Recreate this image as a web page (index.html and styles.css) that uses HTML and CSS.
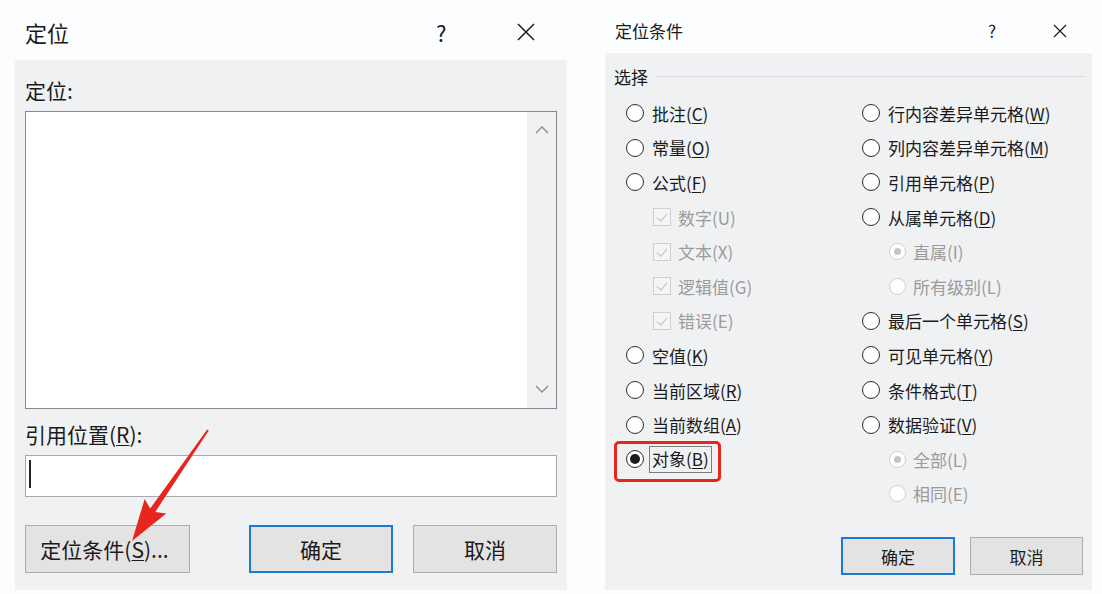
FILE: index.html
```html
<!DOCTYPE html>
<html lang="zh-CN">
<head>
    <meta charset="UTF-8">
    <title>定位</title>
    <link rel="stylesheet" href="styles.css">
</head>
<body>

<div class="screen">
    <!--左边：定位对话框-->
    <section class="dlg goto">
        <header class="goto-title">
            <span class="title-text">定位</span>
            <span class="help">?</span>
            <svg class="close" width="18" height="18" viewBox="0 0 18 18"><path d="M1 1L17 17M17 1L1 17" stroke="#222" stroke-width="1.6" fill="none"/></svg>
        </header>
        <div class="goto-body">
            <div class="label">定位:</div>
            <div class="listbox">
                <div class="list-area"></div>
                <div class="scrollbar">
                    <svg width="14" height="8" viewBox="0 0 14 8"><path d="M1 7L7 1L13 7" stroke="#8a8a8a" stroke-width="1.3" fill="none"/></svg>
                    <svg width="14" height="8" viewBox="0 0 14 8"><path d="M1 1L7 7L13 1" stroke="#8a8a8a" stroke-width="1.3" fill="none"/></svg>
                </div>
            </div>
            <div class="label label-ref">引用位置(<u>R</u>):</div>
            <div class="textbox"><span class="caret"></span></div>
            <div class="btn-row">
                <button class="btn btn-wide">定位条件(<u>S</u>)...</button>
                <div class="btn-group">
                    <button class="btn btn-default">确定</button>
                    <button class="btn">取消</button>
                </div>
            </div>
        </div>
        <!--红色箭头标注-->
        <svg class="arrow" width="600" height="594" viewBox="0 0 600 594">
            <polygon fill="#e8261e" points="207.2,429.4 150.2,508.6 144.7,498.9 132,541 166.3,513.5 155.2,512 208.8,430.6"/>
        </svg>
    </section>

    <!--右边：定位条件对话框-->
    <section class="dlg special">
        <header class="special-title">
            <span class="title-text">定位条件</span>
            <span class="help">?</span>
            <svg class="close" width="14" height="14" viewBox="0 0 14 14"><path d="M1 1L13 13M13 1L1 13" stroke="#222" stroke-width="1.3" fill="none"/></svg>
        </header>
        <div class="special-body">
            <div class="legend"><span>选择</span><i></i></div>
            <div class="cols">
                <div class="col">
                    <div class="opt"><span class="radio"></span>批注(<u>C</u>)</div>
                    <div class="opt"><span class="radio"></span>常量(<u>O</u>)</div>
                    <div class="opt"><span class="radio"></span>公式(<u>F</u>)</div>
                    <div class="opt sub off"><span class="check"></span>数字(U)</div>
                    <div class="opt sub off"><span class="check"></span>文本(X)</div>
                    <div class="opt sub off"><span class="check"></span>逻辑值(G)</div>
                    <div class="opt sub off"><span class="check"></span>错误(E)</div>
                    <div class="opt"><span class="radio"></span>空值(<u>K</u>)</div>
                    <div class="opt"><span class="radio"></span>当前区域(<u>R</u>)</div>
                    <div class="opt"><span class="radio"></span>当前数组(<u>A</u>)</div>
                    <div class="opt mark"><span class="radio on"></span><span class="focus">对象(<u>B</u>)</span></div>
                </div>
                <div class="col">
                    <div class="opt"><span class="radio"></span>行内容差异单元格(<u>W</u>)</div>
                    <div class="opt"><span class="radio"></span>列内容差异单元格(<u>M</u>)</div>
                    <div class="opt"><span class="radio"></span>引用单元格(<u>P</u>)</div>
                    <div class="opt"><span class="radio"></span>从属单元格(<u>D</u>)</div>
                    <div class="opt sub off"><span class="radio small on"></span>直属(I)</div>
                    <div class="opt sub off"><span class="radio small"></span>所有级别(L)</div>
                    <div class="opt"><span class="radio"></span>最后一个单元格(<u>S</u>)</div>
                    <div class="opt"><span class="radio"></span>可见单元格(<u>Y</u>)</div>
                    <div class="opt"><span class="radio"></span>条件格式(<u>T</u>)</div>
                    <div class="opt"><span class="radio"></span>数据验证(<u>V</u>)</div>
                    <div class="opt sub off"><span class="radio small on"></span>全部(L)</div>
                    <div class="opt sub off"><span class="radio small"></span>相同(E)</div>
                </div>
            </div>
            <div class="special-btns">
                <button class="btn btn-default">确定</button>
                <button class="btn">取消</button>
            </div>
        </div>
    </section>
</div>

</body>
</html>
```

FILE: styles.css
```css
body{
    margin: 0;
    background: #fcfdfe;
    font-family: "Noto Sans CJK SC", "Noto Sans", sans-serif;
    color: #1b1b1b;
}
u{
    text-decoration-thickness: 1px;
    text-underline-offset: 2px;
}
.screen{
    display: flex;
    width: 1102px;
    height: 594px;
    overflow: hidden;
}
.dlg{
    position: relative;
    display: flex;
    flex-direction: column;
}

/* 左边对话框 */
.goto{
    width: 600px;
    flex-shrink: 0;
    font-size: 21px;
}
.goto-title{
    height: 60px;
    display: flex;
    align-items: center;
    padding-left: 25px;
    box-sizing: border-box;
    padding-top: 4px;
}
.goto-title .title-text{
    width: 411px;
    font-size: 22px;
}
.goto-title .help{
    font-size: 22px;
    width: 81px;
    color: #222;
}
.goto-body{
    margin-left: 15px;
    width: 552px;
    height: 530px;
    box-sizing: border-box;
    padding: 15px 10px 0;
    background: #f0f1f3;
    display: flex;
    flex-direction: column;
}
.label{
    height: 30px;
    line-height: 30px;
}
.listbox{
    margin-top: 6px;
    height: 298px;
    box-sizing: border-box;
    border: 1px solid #858a92;
    display: flex;
    background: #fff;
}
.list-area{
    flex: 1;
}
.scrollbar{
    width: 29px;
    background: #f1f1f2;
    display: flex;
    flex-direction: column;
    justify-content: space-between;
    align-items: center;
    padding: 14px 0 15px;
}
.label-ref{
    margin-top: 10px;
}
.textbox{
    margin-top: 6px;
    height: 42px;
    box-sizing: border-box;
    border: 1px solid #a8a8a8;
    background: #fff;
    padding: 4px 3px;
}
.caret{
    display: block;
    width: 2px;
    height: 28px;
    background: #222;
}
.btn-row{
    margin-top: 28px;
    display: flex;
    justify-content: space-between;
}
.btn-group{
    display: flex;
    gap: 20px;
}
.btn{
    font-family: inherit;
    font-size: inherit;
    color: #1b1b1b;
    background: #e3e3e4;
    border: 1px solid #adadad;
    height: 48px;
    width: 144px;
    padding: 0;
    margin: 0;
}
.btn-wide{
    width: 165px;
    padding-right: 6px;
}
.btn-default{
    border: 2px solid #1a7bd4;
}
.arrow{
    position: absolute;
    left: 0;
    top: 0;
    pointer-events: none;
}

/* 右边对话框 */
.special{
    flex: 1;
    font-size: 17px;
}
.special-title{
    height: 53px;
    display: flex;
    align-items: center;
    padding-left: 15px;
    box-sizing: border-box;
    padding-top: 8px;
}
.special-title .title-text{
    width: 373px;
}
.special-title .help{
    font-size: 17px;
    width: 65px;
    color: #222;
}
.special-body{
    margin-left: 5px;
    width: 487px;
    height: 537px;
    box-sizing: border-box;
    padding: 11px 7px 0 9px;
    background: #f0f1f3;
}
.legend{
    height: 24px;
    display: flex;
    align-items: center;
    gap: 7px;
}
.legend i{
    flex: 1;
    height: 1px;
    background: #d6d7da;
}
.cols{
    display: flex;
    margin-top: 8px;
    padding-left: 12px;
}
.col{
    width: 236px;
    flex-shrink: 0;
}
.col + .col{
    width: auto;
    flex: 1;
}
.opt{
    height: 34.6px;
    display: flex;
    align-items: center;
    position: relative;
    white-space: nowrap;
}
.radio{
    width: 18px;
    height: 18px;
    flex-shrink: 0;
    box-sizing: border-box;
    border: 1.5px solid #2c2c2c;
    border-radius: 50%;
    background: #fff;
    margin-right: 8px;
    display: flex;
    align-items: center;
    justify-content: center;
}
.radio.on::after{
    content: "";
    width: 10px;
    height: 10px;
    border-radius: 50%;
    background: #1b1b1b;
}
.sub{
    padding-left: 27px;
}
.off{
    color: #9b9b9b;
}
.radio.small{
    width: 17px;
    height: 17px;
    border: 1px solid #cfcfd2;
    margin-right: 7px;
}
.radio.small.on::after{
    width: 7px;
    height: 7px;
    background: #c4c4c6;
}
.check{
    width: 18px;
    height: 18px;
    box-sizing: border-box;
    border: 1px solid #cfcfd2;
    background: #f5f5f6;
    margin-right: 7px;
    position: relative;
}
.check::after{
    content: "";
    position: absolute;
    left: 5px;
    top: 2px;
    width: 5px;
    height: 9px;
    border: solid #bdbdc0;
    border-width: 0 1.5px 1.5px 0;
    transform: rotate(40deg);
}
.focus{
    border: 1px solid #7d7d7d;
    padding: 0 2px 1px;
    margin-left: -3px;
    line-height: 24px;
}
.mark::before{
    content: "";
    position: absolute;
    left: -12px;
    top: -1px;
    width: 107px;
    height: 41px;
    box-sizing: border-box;
    border: 3px solid #e8261e;
    border-radius: 5px;
}
.special-btns{
    margin-top: 26px;
    display: flex;
    justify-content: flex-end;
    gap: 15px;
    padding-right: 2px;
}
.special-btns .btn{
    height: 38px;
    width: 113px;
}
.special-btns .btn-default{
    width: 114px;
}
```
